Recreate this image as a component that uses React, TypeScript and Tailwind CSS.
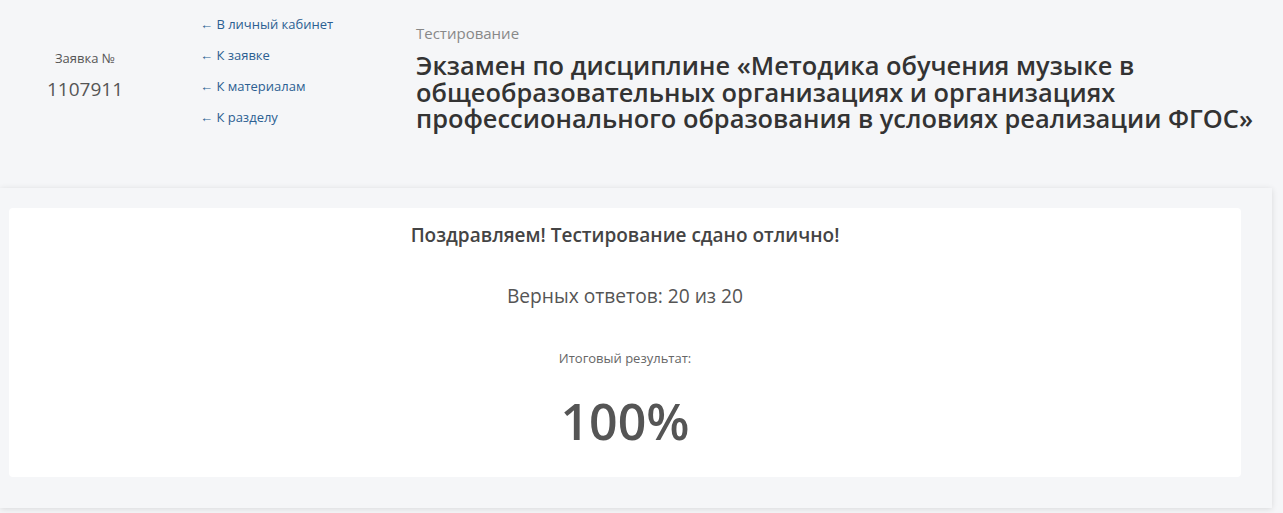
import React from "react";

const links = ["В личный кабинет", "К заявке", "К материалам", "К разделу"];

function App() {
  return (
    <div
      className="min-h-[513px] bg-[#f5f6f8] text-[#333]"
      style={{ fontFamily: '"Open Sans", "Noto Sans", sans-serif' }}
    >
      <header className="flex h-[188px]">
        <div className="w-[170px] pt-[49px] text-center">
          <div className="text-[13px] leading-[18px] text-[#555]">Заявка №</div>
          <div className="mt-[9px] text-[19px] leading-[27px] text-[#555]">1107911</div>
        </div>
        <nav className="ml-[30px] flex w-[216px] flex-col gap-[13px] pt-[15px]">
          {links.map((l) => (
            <a key={l} href="#" className="text-[13px] leading-[18px] text-[#2c5f92]">
              ← {l}
            </a>
          ))}
        </nav>
        <div className="flex-1 pr-[20px] pt-[23px]">
          <div className="text-[15px] leading-[20px] text-[#888]">Тестирование</div>
          <h1 className="mt-[9px] text-[25.4px] font-semibold leading-[26.5px] text-[#333]">
            Экзамен по дисциплине «Методика обучения музыке в общеобразовательных организациях и
            организациях профессионального образования в условиях реализации ФГОС»
          </h1>
        </div>
      </header>
      <section className="mr-[11px] bg-[#f5f6f8] pb-[31px] pl-[9px] pr-[31px] pt-[20px] shadow-[0_1px_6px_rgba(0,0,0,0.12)]">
        <div className="flex h-[269px] flex-col items-center rounded-[4px] bg-white pt-[15px] text-center">
          <div className="text-[19px] font-semibold leading-[25px] text-[#444]">
            Поздравляем! Тестирование сдано отлично!
          </div>
          <div className="mt-[35px] text-[19.2px] leading-[25px] text-[#555]">
            Верных ответов: 20 из 20
          </div>
          <div className="mt-[42px] text-[13px] leading-[17px] text-[#666]">Итоговый результат:</div>
          <div className="mt-[22px] text-[50px] font-semibold leading-[65px] text-[#555]">100%</div>
        </div>
      </section>
    </div>
  );
}

export default App;
